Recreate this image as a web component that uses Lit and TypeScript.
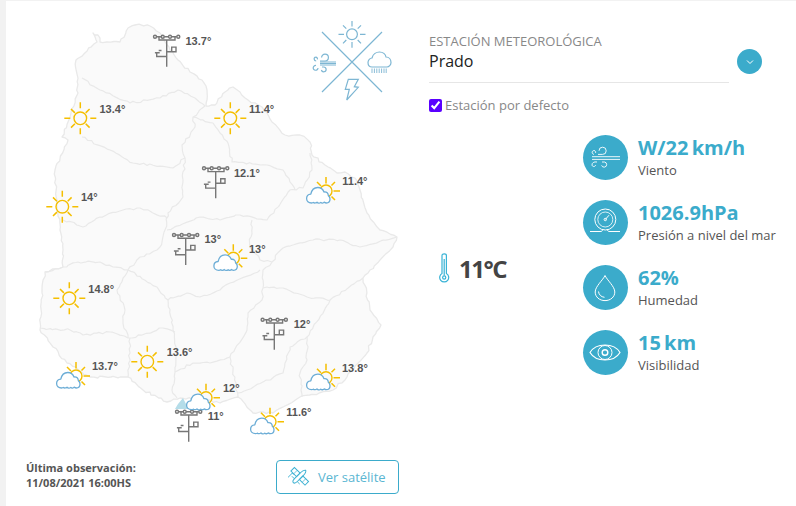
import { LitElement, html, css, svg } from "lit";
import { customElement } from "lit/decorators.js";

type P = [number, number];

let seed = 11;
const rnd = () => {
  seed = (seed * 16807) % 2147483647;
  return (seed % 1000) / 1000 - 0.5;
};
const wobble = (pts: P[], closed = false) => {
  const out: string[] = [];
  const list = closed ? [...pts, pts[0]] : pts;
  list.forEach((p, i) => {
    if (i === 0) {
      out.push(`M${p[0]} ${p[1]}`);
      return;
    }
    const a = list[i - 1];
    const len = Math.hypot(p[0] - a[0], p[1] - a[1]);
    const n = Math.max(1, Math.round(len / 3.5));
    for (let k = 1; k < n; k++) {
      const t = k / n;
      out.push(`L${(a[0] + (p[0] - a[0]) * t + rnd() * 2.2).toFixed(1)} ${(a[1] + (p[1] - a[1]) * t + rnd() * 2.2).toFixed(1)}`);
    }
    out.push(`L${p[0]} ${p[1]}`);
  });
  return out.join("") + (closed ? "Z" : "");
};

const OUTLINE: P[] = [[128,28],[135,25],[150,26],[160,33],[170,50],[178,60],[190,72],[202,80],[207,90],[206,106],[215,105],[225,92],[233,87],[240,92],[248,100],[262,107],[272,122],[285,135],[300,135],[310,142],[312,155],[325,165],[337,173],[345,172],[355,178],[360,190],[367,213],[380,230],[397,237],[393,247],[387,253],[370,270],[363,278],[370,310],[381,325],[373,337],[367,353],[347,377],[333,390],[300,397],[273,413],[253,413],[238,397],[220,403],[207,400],[180,398],[167,402],[143,390],[128,377],[90,377],[67,363],[53,347],[40,330],[42,293],[45,272],[63,267],[63,250],[60,230],[57,207],[55,170],[68,140],[62,137],[78,93],[76,60],[97,42],[93,33],[98,35],[100,42],[120,42]];
const BORDERS: P[][] = [
  [[82,78],[100,90],[130,103],[160,98],[178,90],[195,98],[205,106]],
  [[205,106],[193,117],[195,127],[182,145],[185,158],[183,180],[183,197],[168,213],[165,230],[160,247],[157,250],[140,257],[128,270]],
  [[82,137],[110,150],[133,163],[167,167],[173,168],[185,158]],
  [[63,220],[83,227],[100,217],[123,210],[140,208],[167,218]],
  [[193,117],[213,123],[220,133],[228,143],[232,162],[267,165],[283,170],[295,190]],
  [[310,153],[312,170],[303,188],[290,190],[267,220],[240,215],[220,220],[200,217],[167,230]],
  [[252,220],[250,247],[260,260],[272,262],[263,270],[263,288]],
  [[272,262],[283,248],[313,240],[340,240],[360,247],[397,237]],
  [[263,288],[283,288],[307,297],[330,300],[363,278]],
  [[330,300],[307,337],[307,360],[300,373],[302,397]],
  [[263,288],[262,300],[248,313],[247,330],[230,357],[233,370],[238,397]],
  [[307,337],[290,347],[283,373],[247,390],[238,393]],
  [[230,357],[210,363],[193,363],[175,372],[172,390],[177,398]],
  [[175,372],[177,350],[173,330],[168,300],[157,287],[128,270]],
  [[40,328],[70,330],[83,335],[110,332],[128,338],[132,338],[163,328],[175,332]],
  [[128,338],[123,320],[125,310],[117,290],[128,270]],
  [[130,338],[130,353],[128,377]],
  [[45,272],[63,267],[78,262],[100,262],[113,267],[128,270]],
  [[168,300],[187,293],[200,297],[220,290],[230,283],[260,270]],
];
const outlinePath = wobble(OUTLINE, true);
const borderPaths = BORDERS.map((b) => wobble(b));

const SUNS: P[] = [[80.3,118.3],[230.3,118.3],[62.3,206.7],[69.3,298.3],[147.3,361.7]];
const CLOUDSUNS: P[] = [[326,191],[233.3,258.3],[76,376],[206,397.7],[326,377.7],[270,421.7]];
const STATIONS: P[] = [[166.7,36.7],[215.7,168.3],[185.7,235],[274.3,319.7],[188.7,411.7]];
const LABELS: [number, number, string][] = [
  [185.5,41,"13.7°"],[99.5,109,"13.4°"],[249,109,"11.4°"],[234,173,"12.1°"],[81,197,"14°"],
  [342.3,181,"11.4°"],[204.5,239,"13°"],[249,248.5,"13°"],[88.3,289,"14.8°"],[293.7,324,"12°"],
  [166.7,352,"13.6°"],[92,366,"13.7°"],[342,368,"13.8°"],[223,388,"12°"],[207.7,416,"11°"],[286.3,412,"11.6°"],
];

const sun = ([x, y]: P) => svg`<g transform="translate(${x} ${y})" class="sun">
  <circle r="6.3"/>
  <path d="M0-16V-10M0 16V10M-16 0H-10M16 0H10M-9.3-9.3L-5.4-5.4M9.3-9.3L5.4-5.4M-9.3 9.3L-5.4 5.4M9.3 9.3L5.4 5.4"/>
</g>`;
const cloudSun = ([x, y]: P) => svg`<g transform="translate(${x} ${y})">
  <g class="sun"><circle r="6"/>
  <path d="M0-14V-7.5M14 0H7.5M-9-9L-5-5M9-9L5.5-5.5M9 9L5.5 5.5"/></g>
  <path class="cloud" d="M-14.5 12C-17.5 12-19.4 10-19.4 7.6C-19.4 5-17.5 3.4-15.2 3.2C-14.4-.8-11.6-3.5-8.2-3.5C-5.2-3.5-3-1.6-2 1C.8.6 2.3 2.4 2.3 4.6C3.6 5.4 4 6.8 4 8C4 10.4 2.4 12 .2 12C-.8 12-1.4 11.4-1.8 11.2C-2.6 12.2-4.4 12.4-5.2 11.4C-6.2 12.4-8.2 12.4-9 11.2C-10 12.2-12 12.2-12.6 11.4C-13 11.8-13.8 12-14.5 12Z"/>
</g>`;
const station = ([x, y]: P) => svg`<g transform="translate(${x} ${y})" class="station">
  <circle cx="-11.7" r="1.5"/><circle cx="-4" r="1.5"/><circle cx="3.3" r="1.5"/><circle cx="11.6" r="1.5"/>
  <path d="M-10 0H-5.6M-2.5 0H1.8M4.8 0H10M-7.7 0V3.3H8.3V0M0 3.3V30M0 15H5V10.4H9.3V15H5M0 19.8H-10V16H-11.8M-11.8 16H-7M-8 13.8H-5.2"/>
</g>`;

const logo = svg`<g class="logo">
  <path d="M322 32L382 92M382 32L322 92"/>
  <circle cx="352" cy="34.3" r="5.4"/>
  <path d="M352 21V26.5M352 42V47.7M338.5 34.3H344M360 34.3H365.5M343 25.3L346.3 28.6M361 25.3L357.7 28.6M343 43.3L346.3 40M361 43.3L357.7 40"/>
  <path d="M320 62H336M320 63.5H336M320 65H336" stroke-width="1"/>
  <path d="M320 61H325A3.4 3.4 0 1 0 321.6 57.6M316.2 61C313.8 60.8 313.4 57.4 315.6 57.2C317 57 317.8 58.4 317.2 59.4M316 65.5A2.4 2.4 0 1 0 318 68M322 67H323.6A2.4 2.4 0 1 1 321.4 70"/>
  <path d="M372 67C369.5 67 368 65 368 62.5C368 60 370 58 372 58C373 54 376.5 52 379.5 52C383 52 385.5 54.5 386 57C389 57 391 59.5 391 62.5C391 65 389 67 387 67Z"/>
  <path d="M372 68.5V73M374.4 68.5V73M376.8 68.5V73M379.2 68.5V73M381.6 68.5V73M384 68.5V73M386.2 68.5V73" stroke-width=".9"/>
  <path d="M348.3 79.3H358.3L354.3 86.7L358.3 87.3L346.7 100L349.3 89.3H345.3Z"/>
</g>`;

@customElement("app-root")
export class AppRoot extends LitElement {
  static styles = css`
    :host {
      display: block;
      height: 506px;
      box-sizing: border-box;
      background: #fff;
      border-left: 6px solid #f2f2f2;
      border-top: 1px solid #f2f2f2;
      font-family: "Open Sans", sans-serif;
      overflow: hidden;
    }
    .page { display: flex; }
    .left { width: 417px; flex: none; display: flex; flex-direction: column; }
    .map { display: block; width: 417px; height: 450px; }
    .land { fill: #fafafa; stroke: #e9e9e9; stroke-width: 1.3; stroke-linejoin: round; }
    .inner { fill: none; stroke: #e9e9e9; stroke-width: 1.2; stroke-linejoin: round; }
    .mvd { fill: #b5dde9; }
    .sun circle { fill: none; stroke: #f5bf00; stroke-width: 1.4; }
    .sun path { fill: none; stroke: #f5bf00; stroke-width: 1.5; }
    .cloud { fill: #fff; stroke: #6cadd6; stroke-width: 1.3; stroke-linejoin: round; }
    .station { fill: none; stroke: #777; stroke-width: 1.4; }
    .logo { fill: none; stroke: #7db6d3; stroke-width: 1.2; }
    .temp-label { font: bold 11px "Liberation Sans", Arial, sans-serif; fill: #555; }
    .footer {
      display: flex;
      justify-content: space-between;
      align-items: flex-start;
      padding: 9px 24px 0 20px;
    }
    .obs { font-size: 11px; line-height: 15px; font-weight: 700; color: #555; }
    .sat {
      box-sizing: border-box;
      width: 123px;
      height: 34px;
      border: 1px solid #3babcb;
      border-radius: 4px;
      display: flex;
      align-items: center;
      padding-left: 11px;
      gap: 8px;
      font-size: 13px;
      color: #5ab6d2;
    }
    .sat svg { width: 22px; height: 22px; flex: none; fill: none; stroke: #3db1d2; stroke-width: 1; }
    .right { flex: 1; padding: 32px 0 0 6px; }
    .top { display: flex; gap: 8px; }
    .select { width: 300px; border-bottom: 1px solid #e6e6e6; height: 49px; }
    .caption { font-size: 13px; line-height: 16px; color: #888; }
    .value { font-size: 16px; line-height: 25px; color: #222; }
    .chev {
      width: 25px; height: 25px; border-radius: 50%;
      background: #3babcb; margin-top: 16px;
      display: flex; align-items: center; justify-content: center;
    }
    .chev svg { width: 10px; height: 6px; fill: none; stroke: #fff; stroke-width: 1; }
    .default {
      display: flex; align-items: center; gap: 3px;
      margin-top: 15px; font-size: 13px; line-height: 15px; color: #888;
    }
    .default input { margin: 0; width: 13px; height: 13px; accent-color: #5a00ff; }
    .body { display: flex; margin-top: 22px; }
    .temp {
      width: 154px; flex: none; display: flex; align-items: center; gap: 8px;
      margin-top: 118px; height: 30px; align-self: flex-start; padding-left: 8px; box-sizing: border-box;
      font-size: 24px; font-weight: 700; color: #444; letter-spacing: -1.5px;
    }
    .temp svg { width: 14px; height: 30px; fill: none; stroke: #38b3d6; stroke-width: 1.2; flex: none; }
    .stats { display: flex; flex-direction: column; gap: 20px; }
    .stat { display: flex; align-items: center; gap: 10px; height: 45px; }
    .ico { width: 45px; height: 45px; border-radius: 50%; background: #3babcb; flex: none; }
    .ico svg { display: block; width: 45px; height: 45px; fill: none; stroke: #fff; stroke-width: 1; }
    .num { font-size: 20px; line-height: 23px; font-weight: 700; color: #3babcb; white-space: nowrap; }
    .num span { margin-left: -2px; }
    .lab { font-size: 13px; line-height: 18px; margin-top: 2px; color: #555; white-space: nowrap; }
  `;

  private stat(icon: unknown, num: unknown, lab: string) {
    return html`<div class="stat">
      <div class="ico">${icon}</div>
      <div><div class="num">${num}</div><div class="lab">${lab}</div></div>
    </div>`;
  }

  render() {
    const wind = html`<svg viewBox="0 0 45 45"><path d="M9 21.7H37M9 24.4H37" stroke-width=".9"/><path d="M15 19.4H19.5A3.6 3.6 0 1 0 16 15.8M11 19.4C8.6 19 8.6 15.6 11 15.6C12.6 15.6 13 17 12.4 18M14 27C11 26.4 8.8 28 9 30C9.2 32 12.4 32 12.6 30M19 27H21.5A2.6 2.6 0 1 1 18.6 30.4" stroke-width=".9"/></svg>`;
    const gauge = html`<svg viewBox="0 0 45 45"><circle cx="22.3" cy="19.5" r="10.5"/><circle cx="22.3" cy="19.5" r="7.5" stroke-width=".8"/><path d="M22.3 19.5L26 15.2M7 31.5H17C19 31.5 19.5 31 19.5 29.7M37 31.5H27C25 31.5 24.5 31 24.5 29.7"/><circle cx="22.3" cy="19.5" r="1.2"/></svg>`;
    const drop = html`<svg viewBox="0 0 45 45"><path d="M22 10.5C20 15 12.2 21.5 12.2 27C12.2 32 16.5 35.6 22 35.6C27.5 35.6 31.8 32 31.8 27C31.8 21.5 24 15 22 10.5Z"/><path d="M15.5 26.5C15.8 29.5 18 32 21.5 32.3"/></svg>`;
    const eye = html`<svg viewBox="0 0 45 45"><path d="M7 22.5C13 12.5 31 12.5 37 22.5C31 32.5 13 32.5 7 22.5Z" stroke-width="1.2"/><circle cx="22" cy="22.5" r="7"/><circle cx="22" cy="22.5" r="2.8" stroke-width="1.4"/></svg>`;
    return html`<div class="page">
      <div class="left">
        <svg class="map" viewBox="6 1 417 450">
          <path class="land" d=${outlinePath}/>
          ${borderPaths.map((d) => svg`<path class="inner" d=${d}/>`)}
          <path class="mvd" d="M183 398L186 404L191 409H175L178 404Z"/>
          ${logo}
          ${SUNS.map(sun)}
          ${STATIONS.map(station)}
          ${CLOUDSUNS.map(cloudSun)}
          ${LABELS.map(([x, y, t]) => svg`<text class="temp-label" x=${x} y=${y + 4}>${t}</text>`)}
        </svg>
        <div class="footer">
          <div class="obs">Última observación:<br />11/08/2021 16:00HS</div>
          <div class="sat">
            <svg viewBox="0 0 22 22">
              <g transform="rotate(-45 11 11)">
                <path d="M3 11C3 9.4 5 9 7 9H15C18 9 20 10 20.5 11C20 12 18 13 15 13H7C5 13 3 12.6 3 11Z"/>
                <path d="M6.5 9V5.5M6.5 13V16.5M3 3.5H9V5.5" stroke-width=".9"/>
                <rect x="9.5" y="1" width="5" height="8"/>
                <rect x="9.5" y="13" width="5" height="8"/>
                <path d="M9.5 5H14.5M9.5 17H14.5" stroke-width=".7"/>
              </g>
            </svg>
            Ver satélite
          </div>
        </div>
      </div>
      <div class="right">
        <div class="top">
          <div class="select">
            <div class="caption">ESTACIÓN METEOROLÓGICA</div>
            <div class="value">Prado</div>
          </div>
          <div class="chev"><svg viewBox="0 0 10 6"><path d="M2 1.5L5 4.5L8 1.5"/></svg></div>
        </div>
        <label class="default"><input type="checkbox" checked />Estación por defecto</label>
        <div class="body">
          <div class="temp">
            <svg viewBox="0 0 14 30">
              <path d="M5 20.5V2.6C5 .4 9.4 .4 9.4 2.6V20.5A4.5 4.5 0 1 1 5 20.5Z"/>
              <circle cx="7.2" cy="24.5" r="1.6"/>
              <path d="M7.2 6V22.5"/>
            </svg>
            11°C
          </div>
          <div class="stats">
            ${this.stat(wind, html`W/22 <span>km/h</span>`, "Viento")}
            ${this.stat(gauge, "1026.9hPa", "Presión a nivel del mar")}
            ${this.stat(drop, "62%", "Humedad")}
            ${this.stat(eye, html`15 <span>km</span>`, "Visibilidad")}
          </div>
        </div>
      </div>
    </div>`;
  }
}
